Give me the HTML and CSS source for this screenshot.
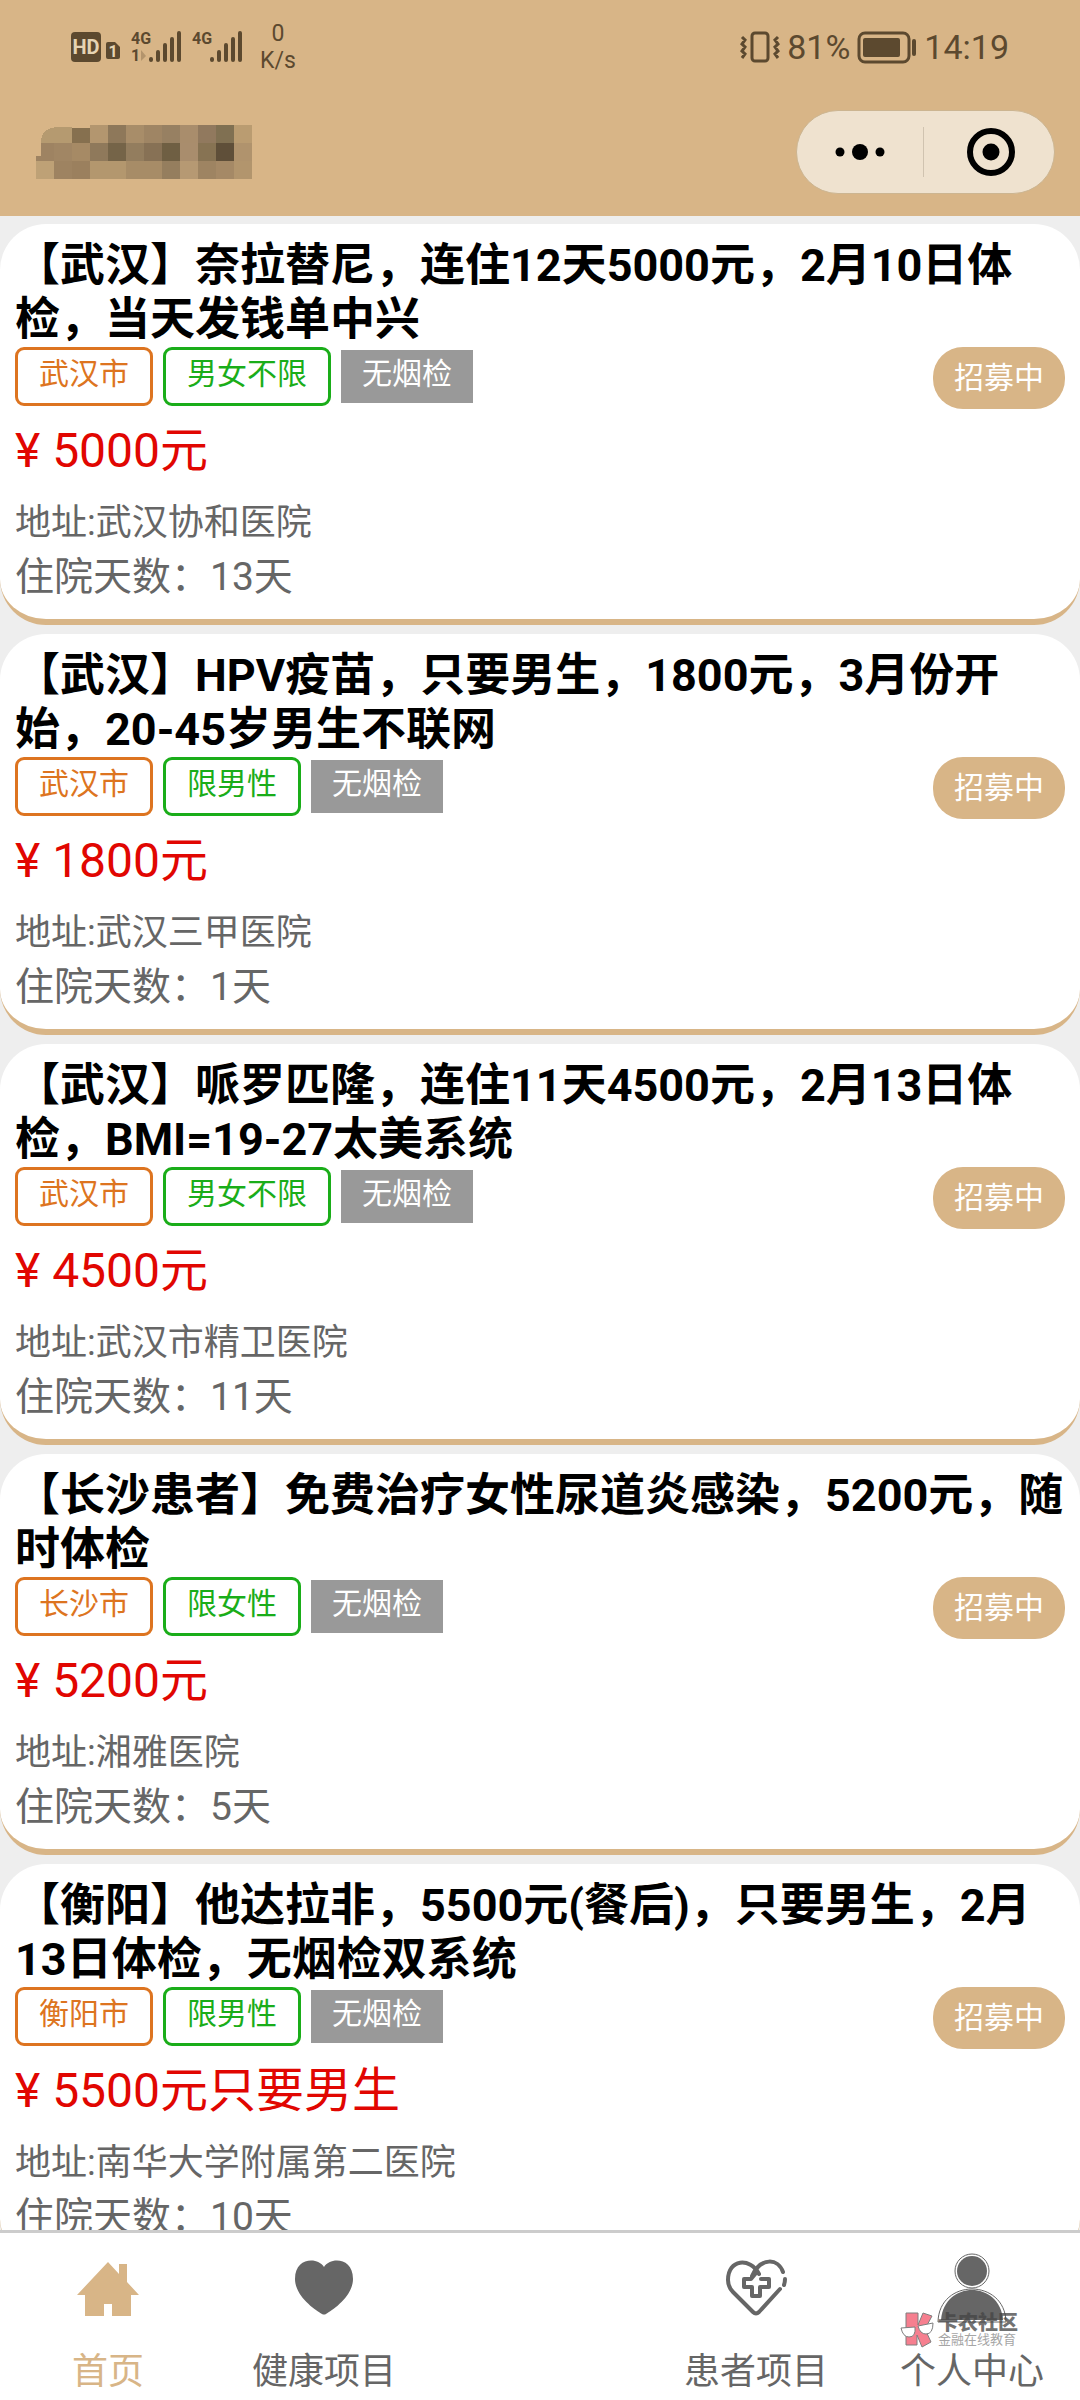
FILE: index.html
```
<!DOCTYPE html>
<html lang="zh-CN">

<head>
    <meta charset="UTF-8">
    <meta name="viewport" content="width=device-width, initial-scale=1">
    <title>项目列表</title>
    <link rel="stylesheet" href="styles.css">
</head>

<body>
    <header class="header">
        <div class="status-bar">
            <div class="status-left">
                <svg class="signal-icons" width="172" height="40" viewBox="0 -3 172 40" aria-hidden="true">
                    <rect x="0" y="2" width="30" height="30" rx="4" />
                    <text class="hd-text" x="15" y="24" text-anchor="middle">HD</text>
                    <path d="M37 12h7l5 5v10q0 2-2 2h-10q-2 0-2-2v-13q0-2 2-2z" />
                    <text class="sim-text" x="42" y="27" text-anchor="middle">1</text>
                    <text class="net-text" x="60" y="14">4G</text>
                    <text class="net-text" x="60" y="31">1</text>
                    <path class="faded" d="M70 20l5 6-5 5z" />
                    <path class="bars" d="M80 29v1M87 22v8M94 15v15M101 9v21M108 3v27" />
                    <text class="net-text" x="121" y="14">4G</text>
                    <path class="bars" d="M141 29v1M148 22v8M155 15v15M162 9v21M169 3v27" />
                </svg>
                <div class="net-speed"><span>0</span><span>K/s</span></div>
            </div>
            <div class="status-right">
                <svg width="40" height="34" viewBox="0 0 40 34" aria-hidden="true">
                    <rect class="line" x="12" y="3" width="16" height="28" rx="3" />
                    <path class="thin" d="M2 7l3 3-3 4 3 3-3 4 3 3-3 4M38 7l-3 3 3 4-3 3 3 4-3 3 3 4" />
                </svg>
                <span>81%</span>
                <svg width="60" height="34" viewBox="0 0 60 34" aria-hidden="true">
                    <rect class="line" x="2" y="3" width="50" height="29" rx="6" />
                    <rect x="6" y="8" width="37" height="19" rx="2" />
                    <rect x="55" y="9" width="4" height="17" rx="2" />
                </svg>
                <span>14:19</span>
            </div>
        </div>
        <div class="title-bar">
            <!-- masked title -->
            <svg class="masked-title" width="216" height="54" viewBox="0 0 216 54" shape-rendering="crispEdges" aria-hidden="true">
                <path fill="#b59a70" d="M5 18q0-16 18-16h13v16z" />
                <path fill="#86704f" d="M36 3h18v15h-18z" />
                <path fill="#b3966f" d="M54 0h18v18h-18z" />
                <path fill="#8e785a" d="M72 0h18v18h-18z" />
                <path fill="#a88d69" d="M90 0h18v18h-18z" />
                <path fill="#9f8564" d="M108 0h18v18h-18z" />
                <path fill="#978062" d="M126 0h18v18h-18z" />
                <path fill="#a98d6c" d="M144 0h18v18h-18z" />
                <path fill="#91795e" d="M162 0h18v18h-18z" />
                <path fill="#807052" d="M180 0h18v18h-18z" />
                <path fill="#ba9c71" d="M198 0h18v18h-18z" />
                <path fill="#9e8362" d="M5 18h13v18h-18v-5h5z" />
                <path fill="#a18664" d="M18 18h18v18h-18z" />
                <path fill="#a68a65" d="M36 18h18v18h-18z" />
                <path fill="#8f795b" d="M54 18h18v18h-18z" />
                <path fill="#756448" d="M72 18h18v18h-18z" />
                <path fill="#937d5e" d="M90 18h18v18h-18z" />
                <path fill="#877155" d="M108 18h18v18h-18z" />
                <path fill="#6f5f43" d="M126 18h18v18h-18z" />
                <path fill="#a98d6d" d="M144 18h18v18h-18z" />
                <path fill="#877353" d="M162 18h18v18h-18z" />
                <path fill="#5f4f39" d="M180 18h18v18h-18z" />
                <path fill="#b0936d" d="M198 18h18v18h-18z" />
                <path fill="#bea176" d="M0 36h18v18h-18z" />
                <path fill="#9e8361" d="M18 36h18v18h-18z" />
                <path fill="#9b805e" d="M36 36h18v18h-18z" />
                <path fill="#b3976e" d="M54 36h36v18h-36z" />
                <path fill="#a78c67" d="M90 36h36v18h-36z" />
                <path fill="#957e5e" d="M126 36h18v18h-18z" />
                <path fill="#b69973" d="M144 36h18v18h-18z" />
                <path fill="#9e8462" d="M162 36h18v18h-18z" />
                <path fill="#a58966" d="M180 36h18v18h-18z" />
                <path fill="#b2956d" d="M198 36h18v18h-18z" />
            </svg>
            <div class="capsule">
                <button type="button" aria-label="更多">
                    <svg width="50" height="18" viewBox="0 0 50 18">
                        <circle cx="5" cy="9" r="4.5" />
                        <circle cx="25" cy="9" r="8" />
                        <circle cx="45" cy="9" r="4.5" />
                    </svg>
                </button>
                <button type="button" aria-label="关闭">
                    <svg width="48" height="48" viewBox="0 0 48 48">
                        <circle class="ring" cx="24" cy="24" r="21" />
                        <circle cx="24" cy="24" r="8.5" />
                    </svg>
                </button>
            </div>
        </div>
    </header>

    <main class="list">
        <article class="card">
            <h2>【武汉】奈拉替尼，连住12天5000元，2月10日体检，当天发钱单中兴</h2>
            <div class="tags">
                <span class="tag city">武汉市</span>
                <span class="tag sex">男女不限</span>
                <span class="tag smoke">无烟检</span>
                <span class="state">招募中</span>
            </div>
            <p class="price">¥ 5000元</p>
            <p class="address">地址:武汉协和医院</p>
            <p class="days">住院天数：13天</p>
        </article>

        <article class="card">
            <h2>【武汉】HPV疫苗，只要男生，1800元，3月份开始，20-45岁男生不联网</h2>
            <div class="tags">
                <span class="tag city">武汉市</span>
                <span class="tag sex">限男性</span>
                <span class="tag smoke">无烟检</span>
                <span class="state">招募中</span>
            </div>
            <p class="price">¥ 1800元</p>
            <p class="address">地址:武汉三甲医院</p>
            <p class="days">住院天数：1天</p>
        </article>

        <article class="card">
            <h2>【武汉】哌罗匹隆，连住11天4500元，2月13日体检，BMI=19-27太美系统</h2>
            <div class="tags">
                <span class="tag city">武汉市</span>
                <span class="tag sex">男女不限</span>
                <span class="tag smoke">无烟检</span>
                <span class="state">招募中</span>
            </div>
            <p class="price">¥ 4500元</p>
            <p class="address">地址:武汉市精卫医院</p>
            <p class="days">住院天数：11天</p>
        </article>

        <article class="card">
            <h2>【长沙患者】免费治疗女性尿道炎感染，5200元，随时体检</h2>
            <div class="tags">
                <span class="tag city">长沙市</span>
                <span class="tag sex">限女性</span>
                <span class="tag smoke">无烟检</span>
                <span class="state">招募中</span>
            </div>
            <p class="price">¥ 5200元</p>
            <p class="address">地址:湘雅医院</p>
            <p class="days">住院天数：5天</p>
        </article>

        <article class="card">
            <h2>【衡阳】他达拉非，5500元(餐后)，只要男生，2月13日体检，无烟检双系统</h2>
            <div class="tags">
                <span class="tag city">衡阳市</span>
                <span class="tag sex">限男性</span>
                <span class="tag smoke">无烟检</span>
                <span class="state">招募中</span>
            </div>
            <p class="price">¥ 5500元只要男生</p>
            <p class="address">地址:南华大学附属第二医院</p>
            <p class="days">住院天数：10天</p>
        </article>
    </main>

    <nav class="tabbar">
        <a class="active" href="#home">
            <svg width="72" height="72" viewBox="0 0 72 72" aria-hidden="true">
                <path d="M36 9L5 42h8v21h19v-12h8v12h19v-21h8L55 29v-18h-8v10z" />
            </svg>
            <span>首页</span>
        </a>
        <a href="#health">
            <svg width="72" height="72" viewBox="0 0 72 72" aria-hidden="true">
                <path d="M36 14C30 4 7 4 7 26C7 43 27 57 34 61q2 1 4 0C45 57 65 43 65 26C65 4 42 4 36 14z" />
            </svg>
            <span>健康项目</span>
        </a>
        <a class="blank" href="#add" aria-label="发布"></a>
        <a href="#patient">
            <svg class="outline" width="72" height="72" viewBox="0 0 72 72" aria-hidden="true">
                <path d="M39 21C30 4 8 6 8 27q0 7 5 12l20 20q3 3 6 0l21-23" />
                <path d="M32 23C41 4 58 5 63 19M65 26q0 3-1 6" />
                <path d="M41 26h8v8h-9v9h-8v-9h-8v-8h7l5-6" />
            </svg>
            <span>患者项目</span>
        </a>
        <a href="#me">
            <svg width="72" height="72" viewBox="0 0 72 72" aria-hidden="true">
                <circle cx="36" cy="18" r="15" />
                <circle class="rim" cx="36" cy="18" r="17" />
                <path d="M5 67C8 27 64 27 67 67z" />
                <path class="rim" d="M2 69C3 25 69 25 70 69z" />
            </svg>
            <span>个人中心</span>
        </a>
        <div class="watermark">
            <svg width="34" height="36" viewBox="0 0 34 36" aria-hidden="true">
                <path class="mark" d="M6 1h12v12l5-12 9 3-7 13 6 13-9 5-5-12v10h-11z" />
                <path class="glass" d="M1 16l14-1q1 10-6 10-6 0-8-9zM18 14l15-3q0 11-7 11-6 0-8-8z" />
            </svg>
            <div>
                <strong>卡农社区</strong>
                <small>金融在线教育</small>
            </div>
        </div>
    </nav>
</body>

</html>
```
FILE: styles.css
```
* {
    box-sizing: border-box;
}

body {
    display: flex;
    flex-direction: column;
    height: 100vh;
    margin: 0;
    background: #eee;
    color: #666;
    font-family: Roboto, "Noto Sans CJK SC", sans-serif;
}

h2,
p {
    margin: 0;
    font-weight: normal;
}

/* header */
.header {
    background: #d8b587;
    padding-bottom: 22px;
}

.status-bar {
    display: flex;
    justify-content: space-between;
    align-items: center;
    height: 94px;
    padding: 0 71px;
    color: #5c492f;
    fill: #5c492f;
}

.status-left,
.status-right {
    display: flex;
    align-items: center;
}

.status-left {
    gap: 17px;
}

.status-right {
    gap: 7px;
    font-size: 34px;
}

.net-speed {
    display: flex;
    flex-direction: column;
    align-items: center;
    font-size: 23px;
    line-height: 27px;
}

.signal-icons {
    overflow: visible;
}

.net-text {
    font-size: 16px;
    font-weight: bold;
}

.hd-text {
    fill: #e5d3b3;
    font-size: 20px;
    font-weight: bold;
}

.sim-text {
    fill: #e5d3b3;
    font-size: 16px;
    font-weight: bold;
}

.bars {
    stroke: #5c492f;
    stroke-width: 4;
    stroke-linecap: round;
}

.faded {
    opacity: 0.3;
}

.line,
.thin {
    fill: none;
    stroke: #5c492f;
    stroke-width: 3;
}

.title-bar {
    display: flex;
    justify-content: space-between;
    align-items: center;
    height: 100px;
    padding: 16px 25px 0 36px;
}

.capsule {
    display: flex;
    align-items: center;
    width: 259px;
    height: 84px;
    border: 1px solid #ccb591;
    border-radius: 42px;
    background: #efe2cf;
}

.capsule button {
    display: flex;
    flex: 1;
    justify-content: center;
    align-items: center;
    height: 50px;
    padding: 0;
    border: none;
    background: none;
}

.capsule button + button {
    padding-left: 5px;
    border-left: 1px solid #d0c3b0;
}

.ring {
    fill: none;
    stroke: #000;
    stroke-width: 6;
}

/* cards */
.list {
    flex: 1;
    min-height: 0;
    padding-top: 8px;
    overflow: hidden;
}

.card {
    margin-bottom: 9px;
    padding: 15px;
    border-bottom: 6px solid #d8b587;
    border-radius: 46px;
    background: #fff;
}

.card h2 {
    color: #000;
    font-size: 45px;
    font-weight: bold;
    line-height: 54px;
}

.tags {
    display: flex;
    align-items: flex-start;
    gap: 10px;
    height: 59px;
}

.tag,
.state {
    padding: 0 21px;
    font-size: 30px;
}

.tag {
    padding-bottom: 5px;
    line-height: 48px;
}

.city,
.sex {
    border: 3px solid;
    border-radius: 9px;
}

.city {
    color: #dd7420;
}

.sex {
    color: #1aad19;
}

.smoke {
    margin-top: 3px;
    background: #999;
    color: #fff;
}

.state {
    margin-left: auto;
    border-radius: 30px;
    background: #d8b587;
    color: #fff;
    line-height: 62px;
}

.price {
    padding-top: 12px;
    color: #e10601;
    font-size: 48px;
    line-height: 66px;
}

.address {
    padding-top: 12px;
    font-size: 36px;
    line-height: 54px;
}

.days {
    font-size: 39px;
    line-height: 54px;
}

/* bottom tabs */
.tabbar {
    position: relative;
    display: flex;
    height: 170px;
    border-top: 3px solid #ccc;
    background: #fff;
}

.tabbar a {
    display: flex;
    flex: 1;
    flex-direction: column;
    align-items: center;
    padding-top: 20px;
    color: #666;
    fill: #666;
    font-size: 36px;
    line-height: 54px;
    text-decoration: none;
}

.tabbar a span {
    padding-top: 20px;
}

.tabbar .active {
    color: #d8b587;
    fill: #d8b587;
}

.tabbar .outline {
    fill: none;
    stroke: #666;
    stroke-width: 4;
    stroke-linecap: round;
    stroke-linejoin: round;
}

.rim {
    fill: none;
    stroke: #666;
    stroke-width: 1;
}

.watermark {
    position: absolute;
    right: 62px;
    bottom: 52px;
    display: flex;
    align-items: center;
    gap: 4px;
    opacity: 0.75;
}

.watermark strong,
.watermark small {
    display: block;
}

.watermark strong {
    color: #444;
    font-size: 20px;
    font-weight: 900;
    line-height: 20px;
}

.watermark small {
    color: #888;
    font-size: 13px;
    line-height: 14px;
}

.mark {
    fill: #f4556a;
    stroke: #555;
}

.glass {
    fill: #fff;
    stroke: #555;
}
```
